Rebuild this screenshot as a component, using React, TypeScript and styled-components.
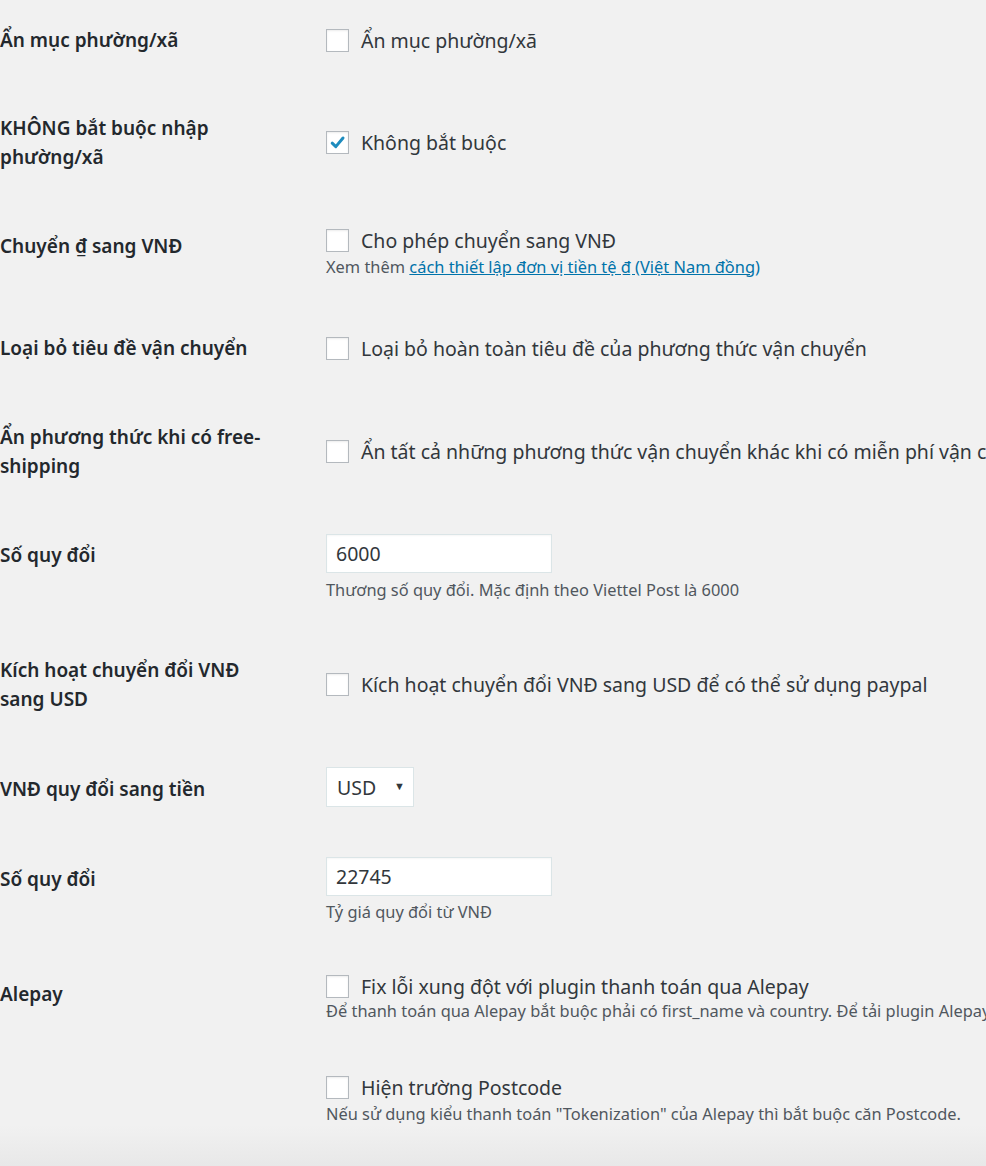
import React from "react";
import styled, { createGlobalStyle } from "styled-components";

const Global = createGlobalStyle`
  html, body { margin: 0; padding: 0; background: #f1f1f1; }
  body {
    overflow: hidden;
    font-family: "Noto Sans", "Open Sans", sans-serif;
    color: #23282d;
  }
`;

const Page = styled.div`
  width: 986px;
  min-height: 1166px;
  box-sizing: border-box;
  padding-top: 25.5px;
  overflow: hidden;
  background: linear-gradient(to bottom, #f1f1f1 0, #f1f1f1 1125px, #e8e8e8 1166px);
`;

const Row = styled.div<{ $h?: number }>`
  display: grid;
  grid-template-columns: 326px 1fr;
  align-items: start;
  height: ${(p) => (p.$h ? `${p.$h}px` : "auto")};
`;

const Label = styled.div<{ $pt?: number }>`
  width: 285px;
  padding-top: ${(p) => p.$pt ?? 0}px;
  font-size: 19px;
  font-weight: 600;
  line-height: 29.5px;
  color: #23282d;
`;

const Field = styled.div<{ $pt?: number }>`
  min-width: 0;
  padding-top: ${(p) => p.$pt ?? 0}px;
`;

const CheckLine = styled.label`
  display: flex;
  align-items: center;
  gap: 12px;
  height: 29px;
  font-size: 19.5px;
  color: #32373c;
  white-space: nowrap;
`;

const Box = styled.span`
  flex-shrink: 0;
  width: 23px;
  height: 23px;
  box-sizing: border-box;
  border: 1px solid #b4b9be;
  background: #fff;
  box-shadow: inset 0 1px 2px rgba(0, 0, 0, 0.08);
  display: flex;
  align-items: center;
  justify-content: center;
`;

const Desc = styled.p<{ $mt?: number }>`
  margin: ${(p) => p.$mt ?? 2}px 0 0;
  font-size: 16.4px;
  line-height: 20px;
  color: #50575e;
  white-space: nowrap;
`;

const Link = styled.a`
  color: #0073aa;
  text-decoration: underline;
`;

const TextInput = styled.input`
  display: block;
  width: 226px;
  height: 39px;
  box-sizing: border-box;
  margin: 0;
  padding: 0 9px;
  border: 1px solid #dbe5e7;
  background: #fff;
  box-shadow: inset 0 1px 2px rgba(0, 0, 0, 0.04);
  font-family: "Noto Sans", "Open Sans", sans-serif;
  font-size: 19.5px;
  color: #32373c;
  outline: none;
`;

const SelectBox = styled.div`
  width: 88px;
  height: 40px;
  box-sizing: border-box;
  border: 1px solid #dbe5e7;
  background: #fff;
  display: flex;
  align-items: center;
  justify-content: space-between;
  padding: 0 8px 0 10px;
  font-size: 19.5px;
  color: #32373c;
`;

const Arrow = styled.span`
  font-size: 11px;
  color: #32373c;
  line-height: 1;
  margin-top: -3px;
`;

const Check = ({ checked }: { checked?: boolean }) => (
  <Box>
    {checked && (
      <svg width="17" height="17" viewBox="0 0 17 17">
        <path d="M3.2 9.2 L6.8 12.6 L14 4" fill="none" stroke="#1e8cbe" strokeWidth="3" strokeLinecap="round" strokeLinejoin="round" />
      </svg>
    )}
  </Box>
);

export default function App() {
  return (
    <>
      <Global />
      <Page>
        <Row $h={88}>
          <Label>Ẩn mục phường/xã</Label>
          <Field>
            <CheckLine><Check />Ẩn mục phường/xã</CheckLine>
          </Field>
        </Row>

        <Row $h={112}>
          <Label>KHÔNG bắt buộc nhập phường/xã</Label>
          <Field $pt={14.5}>
            <CheckLine><Check checked />Không bắt buộc</CheckLine>
          </Field>
        </Row>

        <Row $h={108}>
          <Label $pt={6}>Chuyển ₫ sang VNĐ</Label>
          <Field>
            <CheckLine><Check />Cho phép chuyển sang VNĐ</CheckLine>
            <Desc>
              Xem thêm <Link href="#">cách thiết lập đơn vị tiền tệ ₫ (Việt Nam đồng)</Link>
            </Desc>
          </Field>
        </Row>

        <Row $h={89}>
          <Label>Loại bỏ tiêu đề vận chuyển</Label>
          <Field>
            <CheckLine><Check />Loại bỏ hoàn toàn tiêu đề của phương thức vận chuyển</CheckLine>
          </Field>
        </Row>

        <Row $h={111.5}>
          <Label>Ẩn phương thức khi có free-shipping</Label>
          <Field $pt={14.5}>
            <CheckLine><Check />Ẩn tất cả những phương thức vận chuyển khác khi có miễn phí vận chuyển</CheckLine>
          </Field>
        </Row>

        <Row $h={121.5}>
          <Label $pt={6.5}>Số quy đổi</Label>
          <Field>
            <TextInput readOnly defaultValue="6000" />
            <Desc $mt={7}>Thương số quy đổi. Mặc định theo Viettel Post là 6000</Desc>
          </Field>
        </Row>

        <Row $h={111.5}>
          <Label>Kích hoạt chuyển đổi VNĐ sang USD</Label>
          <Field $pt={14.5}>
            <CheckLine><Check />Kích hoạt chuyển đổi VNĐ sang USD để có thể sử dụng paypal</CheckLine>
          </Field>
        </Row>

        <Row $h={90}>
          <Label $pt={7.5}>VNĐ quy đổi sang tiền</Label>
          <Field>
            <SelectBox>USD<Arrow>▼</Arrow></SelectBox>
          </Field>
        </Row>

        <Row $h={115}>
          <Label $pt={7.5}>Số quy đổi</Label>
          <Field>
            <TextInput readOnly defaultValue="22745" />
            <Desc $mt={6}>Tỷ giá quy đổi từ VNĐ</Desc>
          </Field>
        </Row>

        <Row $h={100.5}>
          <Label $pt={8}>Alepay</Label>
          <Field>
            <CheckLine><Check />Fix lỗi xung đột với plugin thanh toán qua Alepay</CheckLine>
            <Desc $mt={0}>Để thanh toán qua Alepay bắt buộc phải có first_name và country. Để tải plugin Alepay</Desc>
          </Field>
        </Row>

        <Row>
          <Label />
          <Field>
            <CheckLine><Check />Hiện trường Postcode</CheckLine>
            <Desc>Nếu sử dụng kiểu thanh toán "Tokenization" của Alepay thì bắt buộc căn Postcode.</Desc>
          </Field>
        </Row>
      </Page>
    </>
  );
}
